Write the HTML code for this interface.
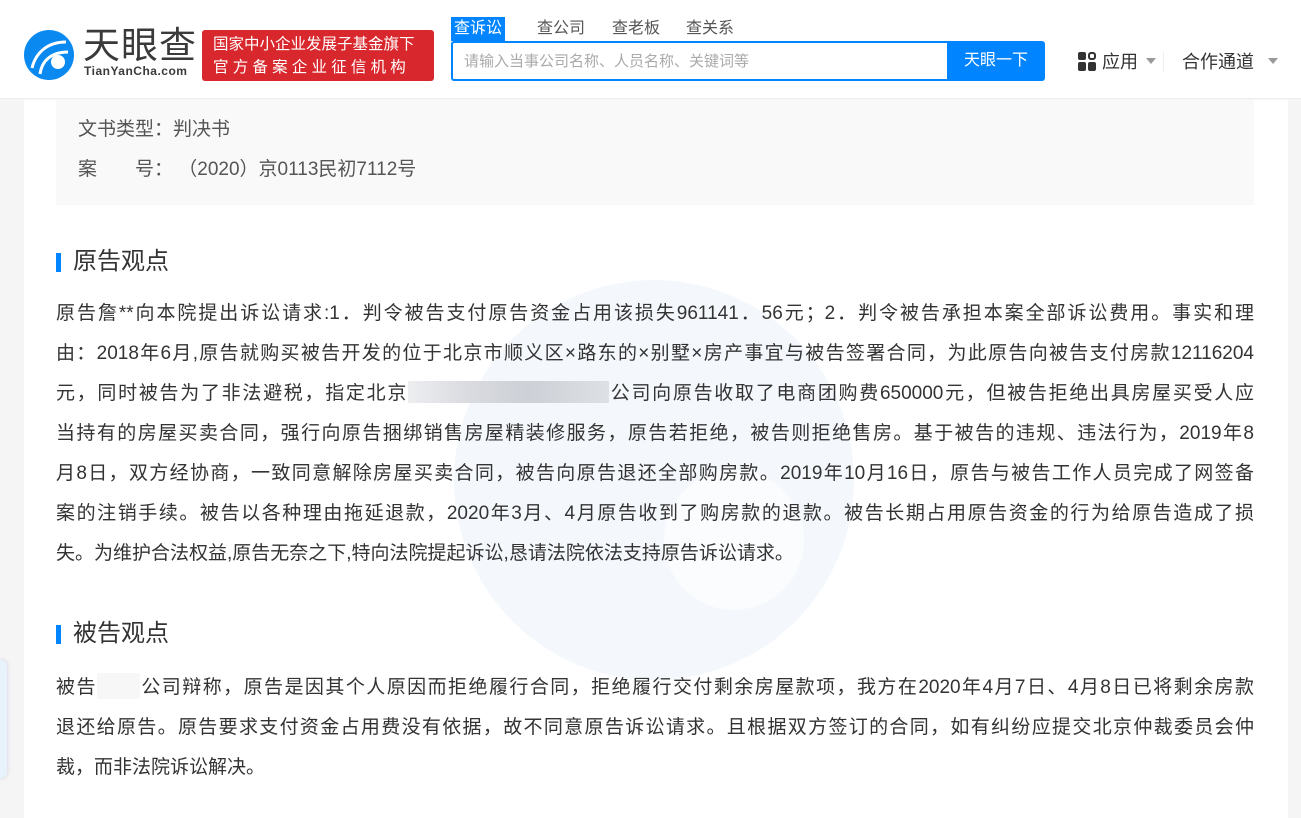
<!DOCTYPE html>
<html><head><meta charset="utf-8">
<style>
*{margin:0;padding:0;box-sizing:border-box}
body{width:1301px;height:818px;overflow:hidden;background:#f5f5f5;font-family:"Liberation Sans","Noto Sans CJK SC",sans-serif;color:#333;position:relative}
.hdr{position:absolute;left:0;top:0;width:1301px;height:99px;background:#fff;border-bottom:1px solid #eee}
.card{position:absolute;left:24px;top:100px;width:1264px;height:718px;background:#fff;overflow:hidden}
.info{position:absolute;left:32px;top:0;width:1198px;height:105px;background:#f9f9f9;font-size:19px;color:#555}
.info div{position:absolute;left:22px}
.h{position:absolute;left:32px;font-size:24px;color:#333;padding-left:17px;line-height:28px}
.h:before{content:"";position:absolute;left:0;top:5px;width:5px;height:19px;background:#0084ff}
.p{position:absolute;left:32px;width:1198px;font-size:19px;color:#333}
.p div{height:40px;line-height:40px;text-align:justify;text-align-last:justify;white-space:nowrap}
.p div.l{text-align-last:left}
.blur{display:inline-block;height:22px;vertical-align:-4px;background:linear-gradient(90deg,#eceef0,#d9dbe0 30%,#cdd0d6 60%,#dde0e4)}
.blurw{display:inline-block;height:26px;vertical-align:-6px;background:#f7f7f7}
</style></head><body>
<div class="hdr">
  <svg style="position:absolute;left:24px;top:30px" width="50" height="50" viewBox="0 0 50 50">
    <circle cx="25" cy="25" r="25" fill="#0a8af0"/>
    <path d="M8 38 C12 22 24 12 42 12" stroke="#fff" stroke-width="3" fill="none"/>
    <path d="M16 44 C18 30 28 22 44 22" stroke="#fff" stroke-width="3" fill="none"/>
    <circle cx="34" cy="32" r="7" fill="#fff"/>
  </svg>
  <div style="position:absolute;left:83px;top:26px;font-size:37px;color:#3a3a3a;letter-spacing:1px;line-height:40px">天眼查</div>
  <div style="position:absolute;left:84px;top:64px;font-size:12px;color:#3a3a3a;letter-spacing:0.5px;font-weight:bold">TianYanCha.com</div>
  <div style="position:absolute;left:202px;top:30px;width:232px;height:51px;background:#d9282d;border-radius:3px;color:#fff;font-size:15.5px;line-height:23px;padding:3px 0 0 11px">
    <div>国家中小企业发展子基金旗下</div><div style="letter-spacing:4.2px">官方备案企业征信机构</div></div>
  <div style="position:absolute;left:451px;top:17px;width:54px;height:24px;background:#0084ff;color:#fff;font-size:16px;text-align:center;line-height:24px">查诉讼</div>
  <div style="position:absolute;left:537px;top:17px;font-size:16px;line-height:24px;color:#555">查公司</div>
  <div style="position:absolute;left:612px;top:17px;font-size:16px;line-height:24px;color:#555">查老板</div>
  <div style="position:absolute;left:686px;top:17px;font-size:16px;line-height:24px;color:#555">查关系</div>
  <div style="position:absolute;left:451px;top:41px;width:497px;height:40px;border:2px solid #0084ff;border-right:none;border-radius:3px 0 0 3px;background:#fff;font-size:15px;color:#aaa;line-height:38px;padding-left:11px">请输入当事公司名称、人员名称、关键词等</div>
  <div style="position:absolute;left:947px;top:41px;width:98px;height:40px;background:#0084ff;border-radius:0 3px 3px 0;color:#fff;font-size:16px;line-height:40px;text-align:center">天眼一下</div>
  <div style="position:absolute;left:1078px;top:52px;width:20px;height:20px">
    <div style="position:absolute;left:0;top:0;width:8px;height:8px;background:#333;border-radius:2px"></div>
    <div style="position:absolute;left:10px;top:0;width:8px;height:8px;border:2px solid #333;border-radius:3px"></div>
    <div style="position:absolute;left:0;top:10px;width:8px;height:9px;background:#333;border-radius:2px"></div>
    <div style="position:absolute;left:10px;top:10px;width:8px;height:9px;background:#333;border-radius:2px"></div>
  </div>
  <div style="position:absolute;left:1102px;top:49px;font-size:18px;color:#333;line-height:26px">应用</div>
  <div style="position:absolute;left:1146px;top:58px;border:5px solid transparent;border-top:6px solid #999"></div>
  <div style="position:absolute;left:1163px;top:52px;width:1px;height:20px;background:#eee"></div>
  <div style="position:absolute;left:1182px;top:49px;font-size:18px;color:#333;line-height:26px">合作通道</div>
  <div style="position:absolute;left:1268px;top:58px;border:5px solid transparent;border-top:6px solid #999"></div>
</div>
<div style="position:absolute;left:0;top:660px;width:7px;height:118px;background:#e8f2fb;border-radius:0 6px 6px 0;box-shadow:0 0 4px #ccd"></div>
<div class="card">
  <svg style="position:absolute;left:420px;top:170px" width="420" height="420" viewBox="0 0 420 420"><circle cx="210" cy="210" r="200" fill="#f4f8fc"/><circle cx="290" cy="270" r="70" fill="#fff" opacity="0.6"/></svg>
  <div class="info">
    <div style="top:14px">文书类型：判决书</div>
    <div style="top:54px"><span style="letter-spacing:38px">案</span>号：&nbsp;（2020）京0113民初7112号</div>
  </div>
  <div class="h" style="top:148px">原告观点</div>
  <div class="p" style="top:194px">
    <div>原告詹**向本院提出诉讼请求:1．判令被告支付原告资金占用该损失961141．56元；2．判令被告承担本案全部诉讼费用。事实和理</div>
    <div>由：2018年6月,原告就购买被告开发的位于北京市顺义区×路东的×别墅×房产事宜与被告签署合同，为此原告向被告支付房款12116204</div>
    <div>元，同时被告为了非法避税，指定北京<span class="blur" style="width:201px"></span>公司向原告收取了电商团购费650000元，但被告拒绝出具房屋买受人应</div>
    <div>当持有的房屋买卖合同，强行向原告捆绑销售房屋精装修服务，原告若拒绝，被告则拒绝售房。基于被告的违规、违法行为，2019年8</div>
    <div>月8日，双方经协商，一致同意解除房屋买卖合同，被告向原告退还全部购房款。2019年10月16日，原告与被告工作人员完成了网签备</div>
    <div>案的注销手续。被告以各种理由拖延退款，2020年3月、4月原告收到了购房款的退款。被告长期占用原告资金的行为给原告造成了损</div>
    <div class="l">失。为维护合法权益,原告无奈之下,特向法院提起诉讼,恳请法院依法支持原告诉讼请求。</div>
  </div>
  <div class="h" style="top:520px">被告观点</div>
  <div class="p" style="top:568px">
    <div>被告<span class="blurw" style="width:43px"></span>公司辩称，原告是因其个人原因而拒绝履行合同，拒绝履行交付剩余房屋款项，我方在2020年4月7日、4月8日已将剩余房款</div>
    <div>退还给原告。原告要求支付资金占用费没有依据，故不同意原告诉讼请求。且根据双方签订的合同，如有纠纷应提交北京仲裁委员会仲</div>
    <div class="l">裁，而非法院诉讼解决。</div>
  </div>
</div>
</body></html>
